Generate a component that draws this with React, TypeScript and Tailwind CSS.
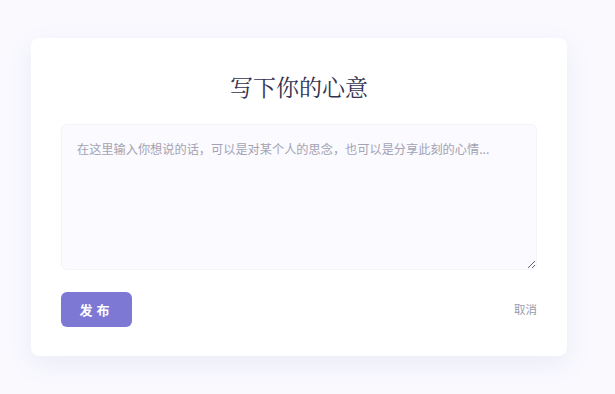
import React, { useState } from 'react';

const App: React.FC = () => {
  const [text, setText] = useState('');

  return (
    <div
      className="min-h-screen w-full bg-[#f9f9fe] pt-[38px] pl-[31px]"
      style={{ fontFamily: '"Noto Sans CJK SC", "Noto Sans", sans-serif' }}
    >
      <div className="w-[536px] rounded-[8px] bg-white px-[30px] pt-[31px] pb-[29px] shadow-[0_8px_24px_rgba(120,120,200,0.10)]">
        {/* 标题 */}
        <h1
          className="mb-[20px] text-center text-[23px] leading-[35px] text-[#33334f]"
          style={{ fontFamily: '"Noto Serif CJK SC", "Noto Sans CJK SC", serif' }}
        >
          写下你的心意
        </h1>

        {/* 输入框 */}
        <textarea
          value={text}
          onChange={e => setText(e.target.value)}
          placeholder="在这里输入你想说的话，可以是对某个人的思念，也可以是分享此刻的心情..."
          className="block h-[146px] w-full rounded-[6px] border border-[#f3f3fa] bg-[#fafaff] px-[15px] py-[14px] text-[12.2px] leading-[20px] text-[#555] placeholder:text-[#a3a3b3] focus:outline-none"
        />

        {/* 按钮 */}
        <div className="mt-[22px] flex items-center justify-between">
          <button
            type="button"
            className="h-[35px] w-[71px] rounded-[6px] bg-[#7d78d4] text-[13px] font-bold tracking-[4px] text-white"
          >
            发布
          </button>
          <button type="button" className="text-[11.5px] text-[#9a9aa8]">
            取消
          </button>
        </div>
      </div>
    </div>
  );
};

export default App;
